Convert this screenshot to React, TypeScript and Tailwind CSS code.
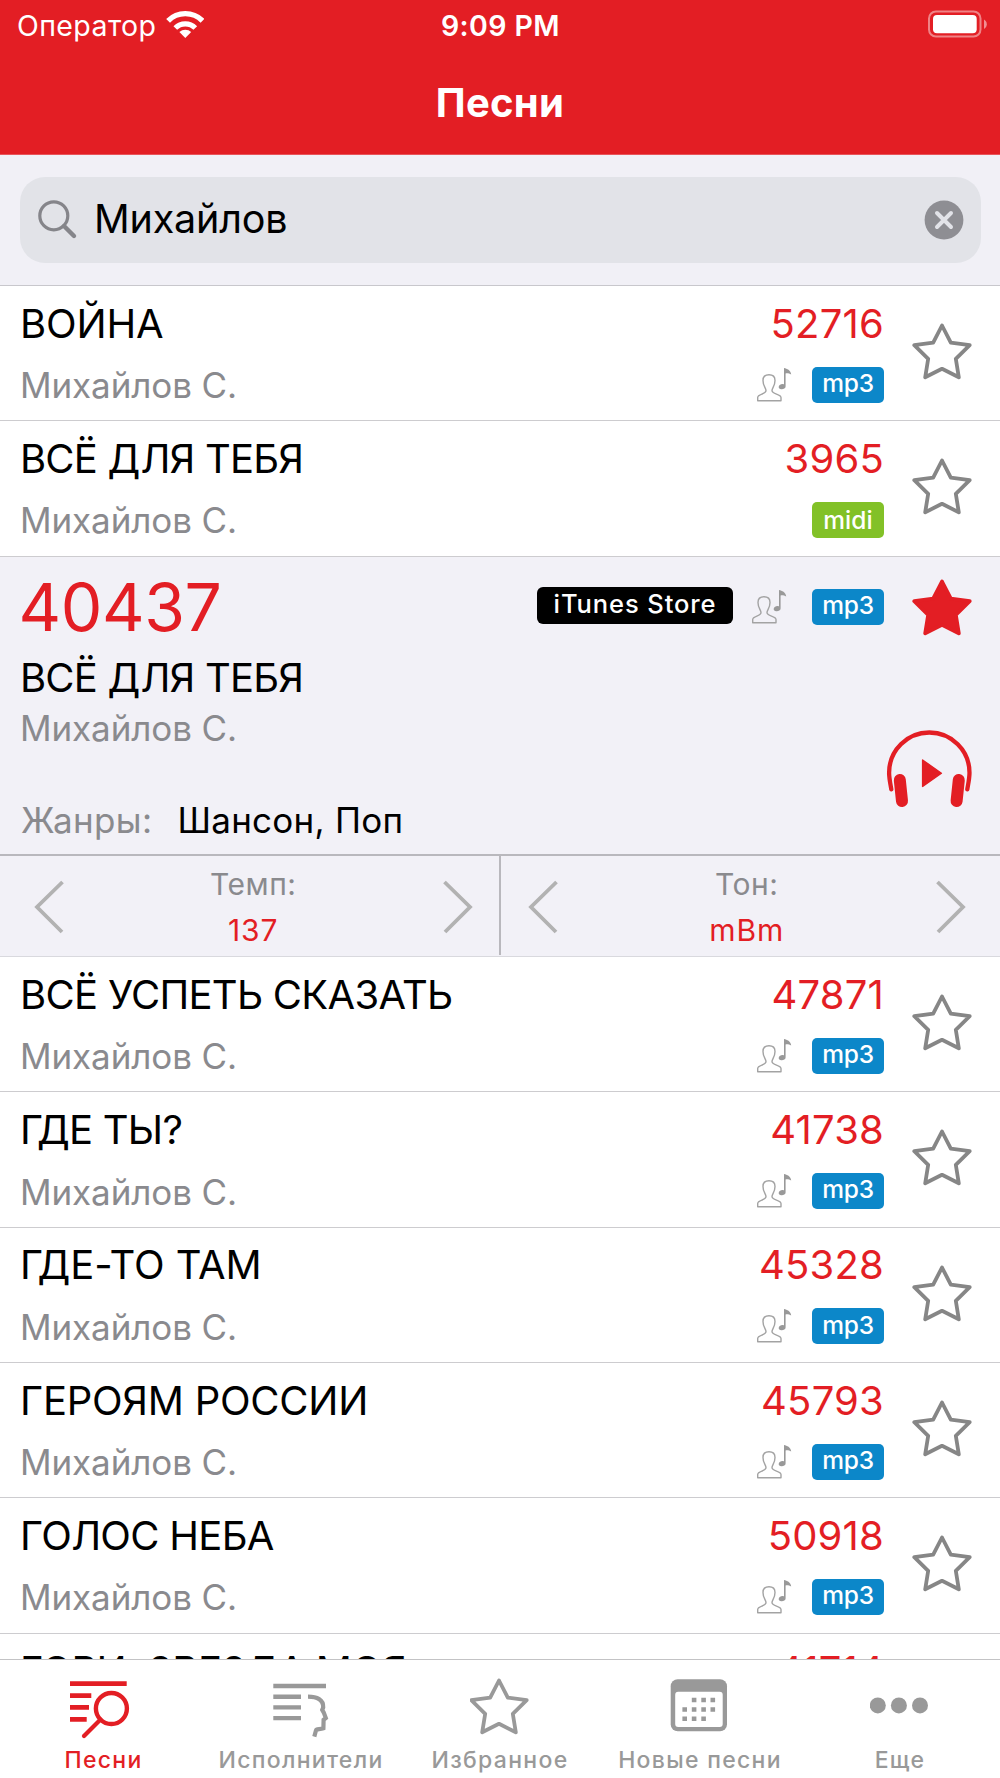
import { useState } from "react";
import type { ReactNode } from "react";

type Format = "mp3" | "midi";

interface Song {
  code: string;
  title: string;
  artist: string;
  format: Format;
  backing: boolean;
  tracking: string;
}

const artist = "Михайлов С.";

const songsBefore: Song[] = [
  { code: "52716", title: "ВОЙНА", artist, format: "mp3", backing: true, tracking: "tracking-[-0.15px]" },
  { code: "3965", title: "ВСЁ ДЛЯ ТЕБЯ", artist, format: "midi", backing: false, tracking: "tracking-[-0.8px]" },
];

const songsAfter: Song[] = [
  { code: "47871", title: "ВСЁ УСПЕТЬ СКАЗАТЬ", artist, format: "mp3", backing: true, tracking: "tracking-[-0.7px]" },
  { code: "41738", title: "ГДЕ ТЫ?", artist, format: "mp3", backing: true, tracking: "tracking-[-0.75px]" },
  { code: "45328", title: "ГДЕ-ТО ТАМ", artist, format: "mp3", backing: true, tracking: "tracking-[-0.1px]" },
  { code: "45793", title: "ГЕРОЯМ РОССИИ", artist, format: "mp3", backing: true, tracking: "tracking-[-0.25px]" },
  { code: "50918", title: "ГОЛОС НЕБА", artist, format: "mp3", backing: true, tracking: "tracking-[-0.7px]" },
  { code: "41714", title: "ГОРИ, ЗВЕЗДА МОЯ", artist, format: "mp3", backing: true, tracking: "tracking-[-0.5px]" },
];

const STAR =
  "M30 3.5L38.8 20.6L57.7 23.2L43.8 36.8L46.8 55.3L30 46.8L13.2 55.3L16.2 36.8L2.3 23.2L21.2 20.6Z";

function StarIcon({ filled = false }: { filled?: boolean }) {
  return (
    <svg
      viewBox="0 0 60 58"
      className={filled ? "h-[58px] w-[60px] shrink-0 text-[#e31e24]" : "h-[58px] w-[60px] shrink-0 text-[#868686]"}
    >
      <path d={STAR} fill={filled ? "currentColor" : "none"} stroke="currentColor" strokeWidth="3.8" strokeLinejoin="round" />
    </svg>
  );
}

function SingerIcon() {
  return (
    <svg viewBox="0 0 36 36" className="h-9 w-9 shrink-0 text-[#a3a3a3]" fill="none">
      <path
        d="M1.7 33.7V30.6C1.7 26.6 10 27.6 10 23.6C10 20.6 7 19.4 7 13.4C7 9.6 9.2 7.7 13 7.7S19 9.6 19 13.4C19 19.4 16 20.6 16 23.6C16 27.6 25 26.6 25 30.6V33.7Z"
        stroke="currentColor"
        strokeWidth="1.4"
        strokeLinejoin="round"
      />
      <path
        d="M28 1C31 2 34.8 2.8 35.2 7.6C33.6 6.4 31.4 6.2 29.6 6.4V19.4A3.5 2.6 -12 1 1 28 17.3Z"
        fill="#999999"
      />
    </svg>
  );
}

function HeadphonesIcon() {
  return (
    <svg viewBox="0 0 87 80" className="h-20 w-[87px] text-[#e31e24]" fill="none" stroke="currentColor" strokeLinecap="round">
      <path d="M5.3 60.3C4.2 54 3.1 49 3.1 43.7A40.2 40.2 0 0 1 83.5 43.7C83.5 49 82.4 54 81.3 60.3" strokeWidth="4.3" />
      <path d="M13.8 51L16 72M72.8 51L70.6 72" strokeWidth="12" />
      <path d="M36.6 31L55.4 44.3L36.6 57.4Z" fill="currentColor" strokeWidth="1.4" strokeLinejoin="round" />
    </svg>
  );
}

function Chevron({ direction }: { direction: "left" | "right" }) {
  return (
    <svg viewBox="0 0 30 54" className="h-[54px] w-[30px] text-[#b2b2b2]" fill="none">
      <path d={direction === "left" ? "M28.5 2L3 27L28 52" : "M1.5 2L27 27L2 52"} stroke="currentColor" strokeWidth="3.8" />
    </svg>
  );
}

function FormatBadge({ format }: { format: Format }) {
  return format === "mp3" ? (
    <span className="flex h-9 w-[72px] items-center justify-center rounded-[5px] bg-[#0c87c9] pb-[3px] text-[24.5px] leading-none font-medium tracking-[-0.2px] text-white">
      mp3
    </span>
  ) : (
    <span className="flex h-9 w-[72px] items-center justify-center rounded-[5px] bg-[#82c127] text-[24.5px] leading-none font-medium text-white">
      midi
    </span>
  );
}

function StatusBar() {
  return (
    <div className="grid h-[52px] grid-cols-3 items-center pr-[13px] pl-[17px] text-[28.5px] leading-none text-white">
      <div className="flex items-center gap-2.5 tracking-[0.4px]">
        Оператор
        <svg viewBox="0 0 38 29" className="mb-1 h-[29px] w-[38px]" fill="none" stroke="white">
          <path d="M2.1 10.8A24.3 24.3 0 0 1 36.5 10.8" strokeWidth="5.4" />
          <path d="M9.3 18A14.2 14.2 0 0 1 29.3 18" strokeWidth="5.2" />
          <path d="M19.3 28L13.4 22.1A8.4 8.4 0 0 1 25.2 22.1Z" fill="white" stroke="none" />
        </svg>
      </div>
      <div className="pr-[3px] text-center font-semibold tracking-[0.4px]">9:09 PM</div>
      <svg viewBox="0 0 60 28" className="mb-1 h-7 w-[60px] justify-self-end" fill="none">
        <rect x="2" y="1.5" width="51.5" height="25" rx="7" stroke="white" strokeOpacity="0.45" strokeWidth="2" />
        <rect x="6" y="5" width="43.7" height="18.3" rx="4" fill="white" />
        <path d="M57 9.5C60.7 11.5 60.7 17 57 19Z" fill="white" fillOpacity="0.5" />
      </svg>
    </div>
  );
}

function SearchField({ value, onChange }: { value: string; onChange: (value: string) => void }) {
  return (
    <div className="h-[131px] shrink-0 border-b border-[#c8c7cc] bg-[#f1f0f6] px-[19.5px] pt-[21.5px]">
      <div className="flex h-[86.5px] items-center rounded-[25px] bg-[#e2e3e8] pr-[17px] pl-[18.5px]">
        <svg viewBox="0 0 40 40" className="h-10 w-10 text-[#85858a]" fill="none" stroke="currentColor">
          <circle cx="15.8" cy="15.8" r="14" strokeWidth="3.2" />
          <path d="M26 26L36 36" strokeWidth="4.4" strokeLinecap="round" />
        </svg>
        <input
          className="ml-4 min-w-0 flex-1 bg-transparent pb-0.5 text-[39.5px] leading-[50px] tracking-[-0.2px] text-black outline-none"
          value={value}
          onChange={(event) => onChange(event.target.value)}
        />
        <button onClick={() => onChange("")} aria-label="Очистить">
          <svg viewBox="0 0 40 40" className="h-10 w-10" fill="none">
            <circle cx="20" cy="20" r="19.4" fill="#8e8e93" />
            <path d="M13 13L27 27M27 13L13 27" stroke="#e2e3e8" strokeWidth="4" strokeLinecap="round" />
          </svg>
        </button>
      </div>
    </div>
  );
}

function SongRow({ song }: { song: Song }) {
  return (
    <li className="flex h-[135.3px] shrink-0 border-b border-[#cdcccf] bg-white pr-[28px] pl-5">
      <div className="flex-1 pt-[12.6px]">
        <p className={`text-[40px] leading-[50px] text-black ${song.tracking}`}>{song.title}</p>
        <p className="mt-[14.6px] text-[35px] leading-[44px] tracking-[-0.1px] text-[#8a8a8e]">{song.artist}</p>
      </div>
      <div className="pt-[12.6px]">
        <p className="text-right text-[40px] leading-[50px] tracking-[0.2px] text-[#e31e24]">{song.code}</p>
        <div className="mt-[14px] flex h-11 items-center justify-end gap-5">
          {song.backing && <SingerIcon />}
          <FormatBadge format={song.format} />
        </div>
      </div>
      <button className="ml-[28px] flex items-start pt-9">
        <StarIcon />
      </button>
    </li>
  );
}

function Stepper({ label, value, className }: { label: string; value: string; className: string }) {
  return (
    <div className={`flex flex-1 items-center justify-between ${className}`}>
      <Chevron direction="left" />
      <div className="text-center text-[30px] leading-[46px]">
        <p className="tracking-[0.5px] text-[#8a8a8e]">{label}</p>
        <p className="tracking-[1px] text-[#e31e24]">{value}</p>
      </div>
      <Chevron direction="right" />
    </div>
  );
}

function SelectedSong() {
  return (
    <li className="flex h-[400.5px] shrink-0 flex-col border-b border-[#d9d9de] bg-[#f2f1f7]">
      <div className="mt-2.5 flex h-20 items-center pr-7 pl-[18.5px]">
        <p className="text-[66px] leading-20 tracking-[-0.4px] text-[#e31e24]">40437</p>
        <span className="mb-[3px] ml-auto flex h-[37px] w-[196px] items-center justify-center rounded-[6px] bg-black pb-0.5 text-[25.5px] leading-none font-medium tracking-[0.9px] text-white">
          iTunes Store
        </span>
        <div className="ml-[18px] flex items-center gap-[25px]">
          <SingerIcon />
          <FormatBadge format="mp3" />
        </div>
        <div className="ml-7">
          <StarIcon filled />
        </div>
      </div>
      <div className="flex flex-1 justify-between pr-[27px] pl-5">
        <div>
          <p className="mt-1.5 text-[40px] leading-[50px] tracking-[-0.8px] text-black">ВСЁ ДЛЯ ТЕБЯ</p>
          <p className="mt-[3.5px] text-[35px] leading-[44px] tracking-[-0.1px] text-[#8a8a8e]">{artist}</p>
          <p className="mt-12 flex text-[35px] leading-[44px] tracking-[0.35px]">
            <span className="w-[157.5px] pl-px text-[#8a8a8e]">Жанры:</span>
            <span className="tracking-[0.25px] text-black">Шансон, Поп</span>
          </p>
        </div>
        <button className="mt-[82.5px] h-20">
          <HeadphonesIcon />
        </button>
      </div>
      <div className="flex h-[102px] border-t-2 border-[#b9b8bd]">
        <Stepper label="Темп:" value="137" className="pt-0.5 pr-[26px] pl-[34px]" />
        <div className="mb-px w-0.5 bg-[#b9b8bd]" />
        <Stepper label="Тон:" value="mBm" className="pt-0.5 pr-[34px] pl-[27px]" />
      </div>
    </li>
  );
}

const tabs: { label: string; labelClass: string; icon: ReactNode }[] = [
  {
    label: "Песни",
    labelClass: "pl-[7px]",
    icon: (
      <>
        <path d="M0 6.7H56.7M0 18.6H21.3M0 30.3H19M0 42.3H16.7" stroke="currentColor" strokeWidth="4.7" />
        <circle cx="41.4" cy="31.5" r="15.5" stroke="currentColor" strokeWidth="4.4" />
        <path d="M30.5 42.5L14 59" stroke="currentColor" strokeWidth="4.2" strokeLinecap="round" />
      </>
    ),
  },
  {
    label: "Исполнители",
    labelClass: "pl-0.5",
    icon: (
      <>
        <path d="M3.3 9H56M3.3 19.7H31M3.3 30.4H31M3.3 41.1H31" stroke="currentColor" strokeWidth="4.4" />
        <path
          d="M39 19.7C48 19.7 54.6 22.5 54.2 30.5L53.2 32.8L54.8 35.6L56.8 41L54.6 42.8L54.4 51.3C51 52.6 47.5 51.8 47 53.3L45.3 59.6"
          transform="translate(-1 0)"
          stroke="currentColor"
          strokeWidth="4.2"
        />
      </>
    ),
  },
  {
    label: "Избранное",
    labelClass: "",
    icon: <path d={STAR} transform="translate(-1 0)" stroke="currentColor" strokeWidth="3.8" strokeLinejoin="round" />,
  },
  {
    label: "Новые песни",
    labelClass: "",
    icon: (
      <>
        <rect x="0.7" y="2.3" width="56.3" height="52" rx="7" fill="currentColor" />
        <rect x="5.2" y="14.7" width="47.5" height="35.3" rx="3" fill="white" />
        <path
          d="M21.8 23H26.4M31.3 23H35.9M40.5 23H45.1M12.4 32.5H17M21.8 32.5H26.4M31.3 32.5H35.9M40.5 32.5H45.1M12.4 41.8H17M21.8 41.8H26.4M31.3 41.8H35.9"
          stroke="currentColor"
          strokeWidth="4.6"
        />
      </>
    ),
  },
  {
    label: "Еще",
    labelClass: "",
    icon: (
      <>
        <circle cx="7.8" cy="28.4" r="8" fill="currentColor" />
        <circle cx="28.9" cy="28.4" r="8" fill="currentColor" />
        <circle cx="50" cy="28.4" r="8" fill="currentColor" />
      </>
    ),
  },
];

function TabBar() {
  const [active, setActive] = useState(0);

  return (
    <nav className="grid h-[119px] shrink-0 grid-cols-5 border-t border-[#c3c3c5] bg-white">
      {tabs.map((tab, index) => (
        <button
          key={tab.label}
          onClick={() => setActive(index)}
          className={`flex flex-col items-center pt-[17px] whitespace-nowrap ${index === active ? "text-[#e31e24]" : "text-[#999999]"}`}
        >
          <svg viewBox="0 0 60 62" className="h-[62px] w-[60px]" fill="none">
            {tab.icon}
          </svg>
          <span className={`mt-[7px] text-[23px] leading-7 font-medium tracking-[1.3px] ${tab.labelClass}`}>{tab.label}</span>
        </button>
      ))}
    </nav>
  );
}

export default function App() {
  const [query, setQuery] = useState("Михайлов");

  return (
    <div className="flex h-[1778px] w-[1000px] flex-col overflow-hidden bg-white font-['Inter','Liberation_Sans',sans-serif]">
      <header className="h-[155px] shrink-0 border-b border-[#e9545a] bg-[#e31e24]">
        <StatusBar />
        <h1 className="mt-[26px] text-center text-[40px] leading-[50px] font-bold tracking-[0.3px] text-white">Песни</h1>
      </header>
      <SearchField value={query} onChange={setQuery} />
      <ul className="flex min-h-0 flex-1 flex-col overflow-hidden">
        {songsBefore.map((song) => (
          <SongRow key={song.code} song={song} />
        ))}
        <SelectedSong />
        {songsAfter.map((song) => (
          <SongRow key={song.code} song={song} />
        ))}
      </ul>
      <TabBar />
    </div>
  );
}
